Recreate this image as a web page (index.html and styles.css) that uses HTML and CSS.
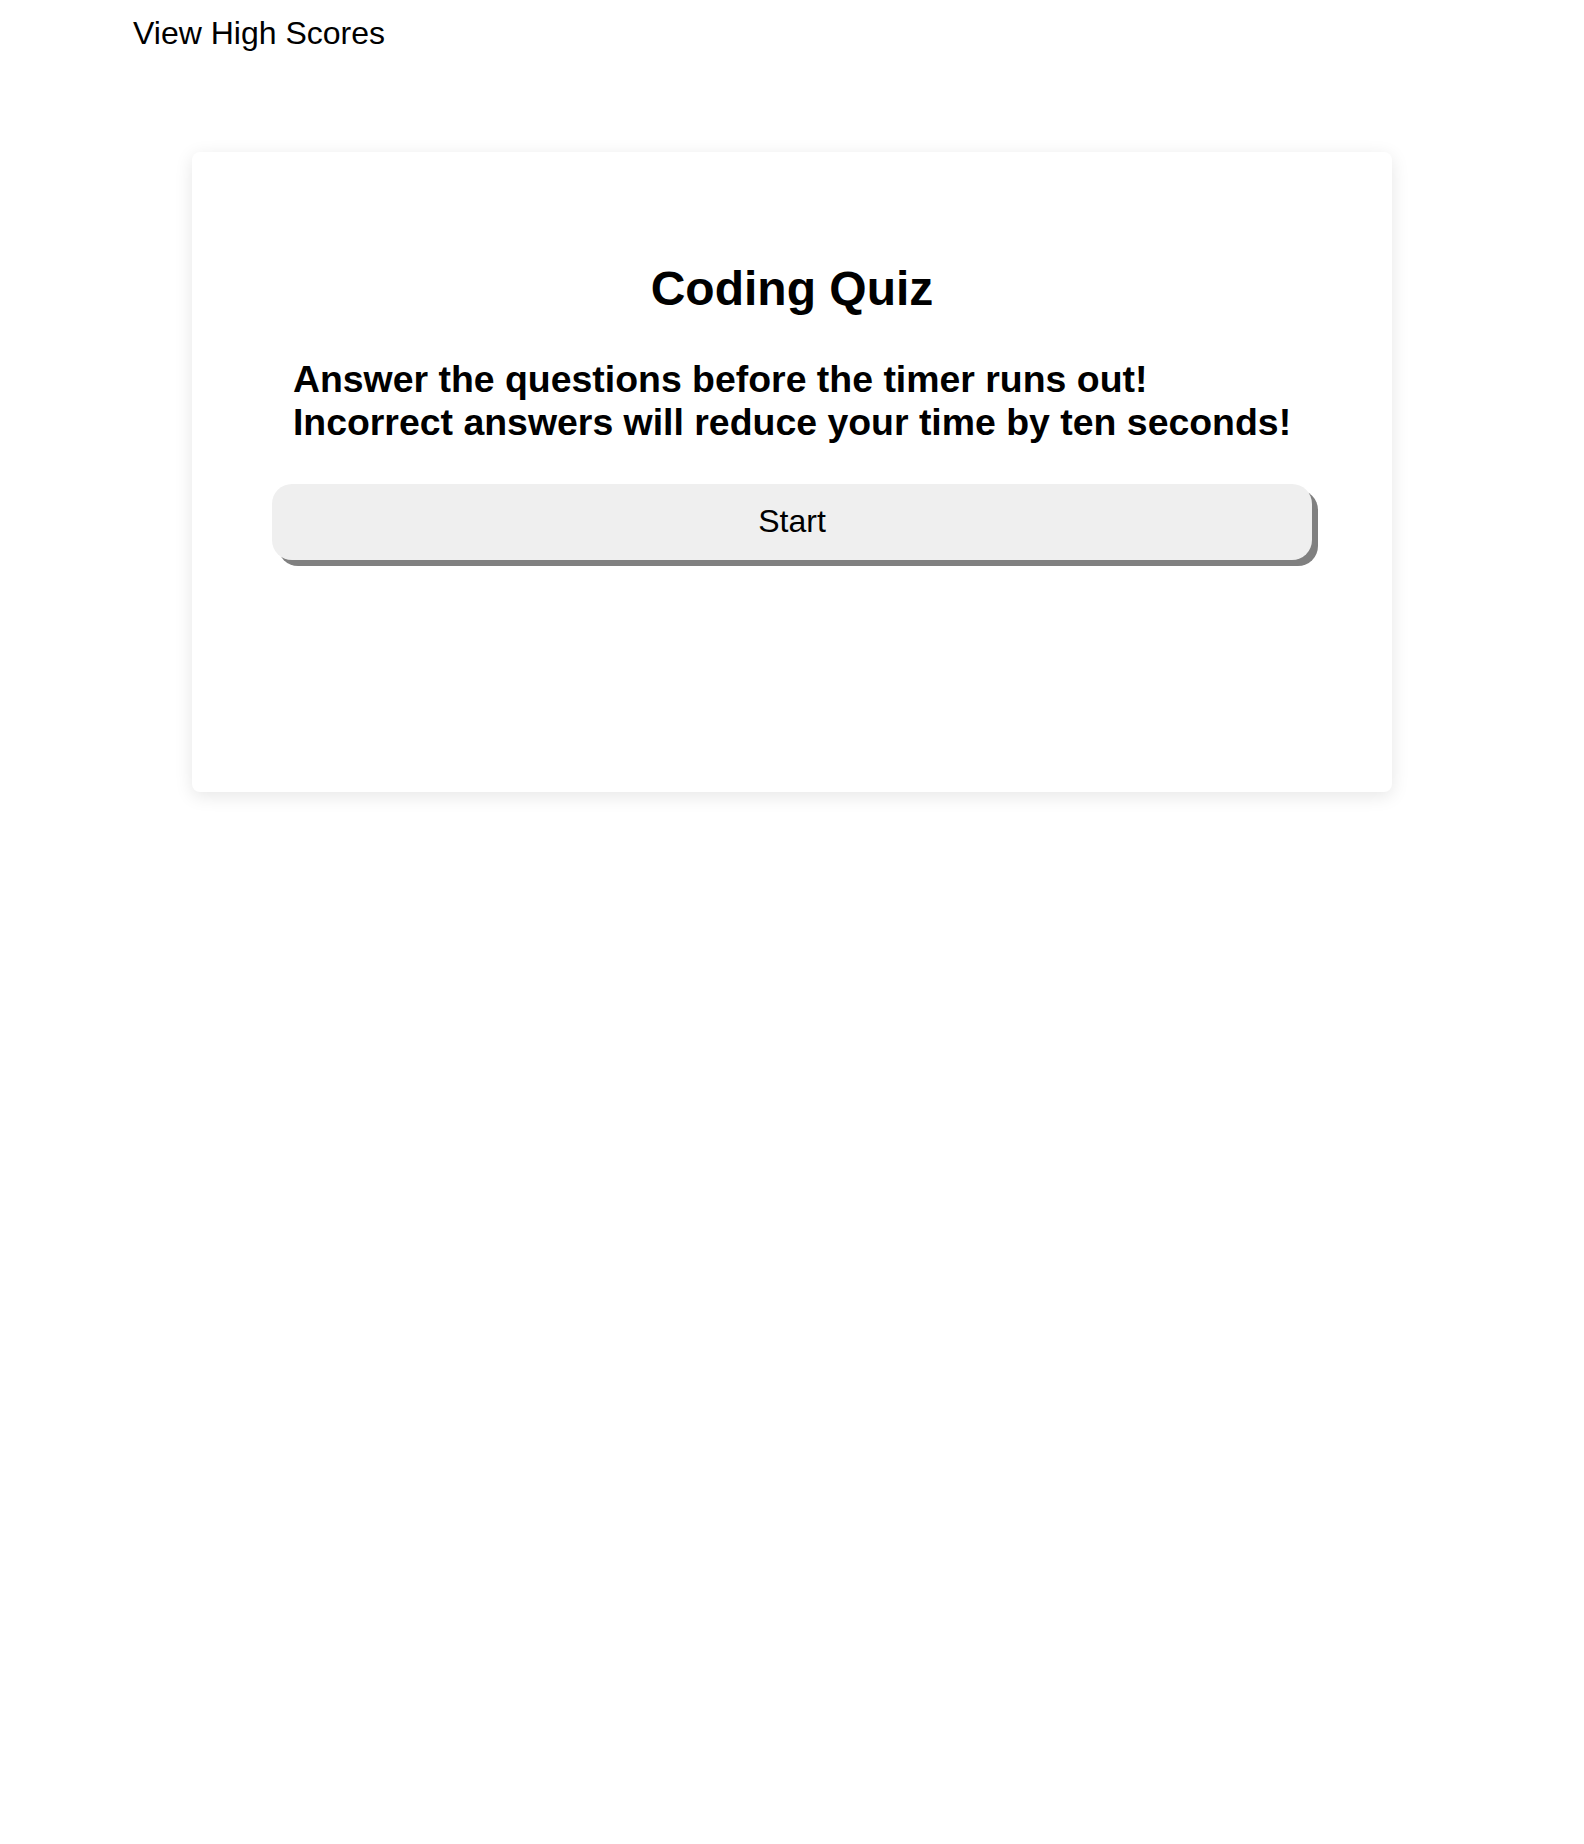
FILE: index.html
```html
<!DOCTYPE html>
<html lang="en">
<head>
<meta charset="utf-8">
<title>Coding Quiz</title>
<link rel="stylesheet" href="styles.css">
</head>
<body>
<header class="top-bar">
  <a class="scores-link" href="#">View High Scores</a>
</header>
<main class="card">
  <h1 class="title">Coding Quiz</h1>
  <h3 class="intro">Answer the questions before the timer runs out!<br>Incorrect answers will reduce your time by ten seconds!</h3>
  <button class="start-btn" type="button">Start</button>
</main>
</body>
</html>
```

FILE: styles.css
```css
html, body {
  margin: 0;
  padding: 0;
  background: #ffffff;
}

body {
  font-family: "Liberation Sans", Arial, sans-serif;
  font-size: 32px;
  color: #000000;
  padding-bottom: 60px;
}

.top-bar {
  padding: 15px 0 0 133px;
  height: 152px;
  box-sizing: border-box;
}

.scores-link {
  color: #000000;
  text-decoration: none;
  font-size: 32px;
}

.card {
  width: 1200px;
  height: 640px;
  margin: 0 auto;
  box-sizing: border-box;
  padding: 109px 80px 0;
  background: #ffffff;
  border-radius: 8px;
  box-shadow: 0 4px 18px rgba(0, 0, 0, 0.1);
  display: flex;
  flex-direction: column;
  align-items: center;
}

.title {
  font-size: 48px;
  font-weight: bold;
  margin: 0;
  text-align: center;
}

.intro {
  font-size: 37.44px;
  font-weight: bold;
  margin: 42px 0 0;
  width: fit-content;
  text-align: left;
}

.start-btn {
  margin-top: 40px;
  width: 1040px;
  height: 76px;
  padding: 0 0 2px;
  border: none;
  border-radius: 20px;
  background: #efefef;
  box-shadow: 6px 6px 0 #808080;
  font-family: "Liberation Sans", Arial, sans-serif;
  font-size: 32px;
  color: #000000;
  cursor: pointer;
}
```
